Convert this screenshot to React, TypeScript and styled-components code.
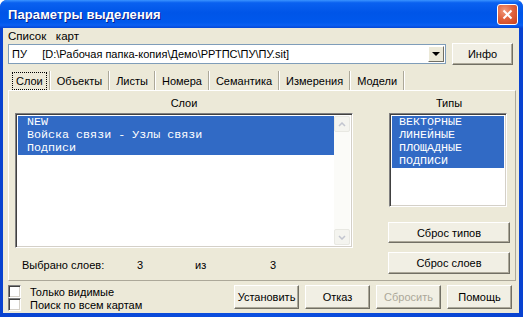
import React from 'react';
import styled, { createGlobalStyle } from 'styled-components';

const Global = createGlobalStyle`
  html, body { margin: 0; padding: 0; background: #fff; }
  body { font-family: "Liberation Sans", Arial, sans-serif; font-size: 11px; color: #000; }
`;

const S = {
  Window: styled.div`
    width: 523px;
    height: 317px;
    display: flex;
    flex-direction: column;
    background: linear-gradient(to right, #0842d0, #0b4fe0 50%, #0842d0);
    border-radius: 7px 7px 0 0;
    overflow: hidden;
  `,
  TitleBar: styled.div`
    height: 28px;
    flex-shrink: 0;
    display: flex;
    align-items: center;
    justify-content: space-between;
    padding: 0 5px 0 8px;
    background: linear-gradient(to bottom, #3a93ff 0%, #0a61f0 10%, #0055e8 45%, #0058ec 80%, #0a5ff2 90%, #0447d6 100%);
  `,
  Title: styled.div`
    color: #fff;
    font-family: "Liberation Sans", Arial, sans-serif;
    font-weight: bold;
    font-size: 13px;
    letter-spacing: 0.1px;
    text-shadow: 1px 1px 0 #0a1e8a;
  `,
  Close: styled.div`
    width: 21px;
    height: 21px;
    box-sizing: border-box;
    border: 1px solid #fff;
    border-radius: 3px;
    background: radial-gradient(circle at 35% 30%, #f29b7c 0%, #e0643f 45%, #c9401b 100%);
    display: flex;
    align-items: center;
    justify-content: center;
  `,
  Body: styled.div`
    flex: 1;
    margin: 0 4px 4px 3px;
    background: #ece9d8;
    display: flex;
    flex-direction: column;
    padding-left: 5px;
  `,
  Label: styled.div`
    height: 14px;
    line-height: 14px;
    margin-top: 1px;
    white-space: pre;
    font-size: 11.5px;
  `,
  ComboRow: styled.div`
    height: 22px;
    display: flex;
    align-items: center;
    padding-right: 6px;
  `,
  Combo: styled.div`
    width: 438px;
    height: 20px;
    box-sizing: border-box;
    background: #fff;
    border: 1px solid #7f9db9;
    display: flex;
    align-items: center;
    padding: 0 1px 0 3px;
    white-space: pre;
  `,
  ComboText: styled.div`
    flex: 1;
  `,
  DropButton: styled.div`
    width: 16px;
    height: 16px;
    box-sizing: border-box;
    background: #ece9d8;
    border: 1px solid;
    border-color: #fff #716f64 #716f64 #fff;
    display: flex;
    align-items: center;
    justify-content: center;
  `,
  Arrow: styled.div`
    width: 0;
    height: 0;
    border-left: 4px solid transparent;
    border-right: 4px solid transparent;
    border-top: 4px solid #000;
  `,
  Button: styled.div<{ $w: number; $h?: number; $disabled?: boolean }>`
    width: ${p => p.$w}px;
    height: ${p => p.$h ?? 22}px;
    box-sizing: border-box;
    background: #f1efe4;
    border: 1px solid;
    border-color: #fff #716f64 #716f64 #fff;
    box-shadow: inset -1px -1px 0 #aca899;
    display: flex;
    align-items: center;
    justify-content: center;
    color: ${p => (p.$disabled ? '#aca899' : '#000')};
    flex-shrink: 0;
  `,
  InfoButton: styled.div`
    margin-left: auto;
  `,
  Tabs: styled.div`
    display: flex;
    height: 19px;
    margin: 6px 0 0 3px;
  `,
  Tab: styled.div`
    height: 19px;
    box-sizing: border-box;
    padding: 0 3px 0 2px;
    display: flex;
    align-items: center;
    border-right: 1px solid #aca899;
    box-shadow: 1px 0 0 #fff;
    margin-right: 2px;
  `,
  TabFocus: styled.span<{ $active?: boolean }>`
    padding: 2px 3px;
    outline: ${p => (p.$active ? '1px dotted #000' : 'none')};
  `,
  Panel: styled.div`
    height: 191px;
    margin-right: 3px;
    box-sizing: border-box;
    border: 1px solid;
    border-color: #fff #aca899 #aca899 #fff;
    display: flex;
    padding: 5px 5px 0 6px;
    gap: 35px;
  `,
  Column: styled.div<{ $w: number }>`
    width: ${p => p.$w}px;
    display: flex;
    flex-direction: column;
  `,
  Header: styled.div`
    height: 14px;
    line-height: 14px;
    text-align: center;
    margin-bottom: 3px;
  `,
  List: styled.div<{ $h: number; $pad: number }>`
    height: ${p => p.$h}px;
    box-sizing: border-box;
    background: #fff;
    border: 1px solid;
    border-color: #808080 #fff #fff #808080;
    box-shadow: inset 1px 1px 0 #404040, inset -1px -1px 0 #d4d0c8;
    padding: 2px;
    display: flex;
    font-family: "Liberation Mono", "Courier New", monospace;
    font-size: 11.7px;
    --pad: ${p => p.$pad}px;
  `,
  Items: styled.div`
    flex: 1;
    display: flex;
    flex-direction: column;
  `,
  Item: styled.div`
    height: 13px;
    line-height: 13px;
    background: #316ac5;
    color: #fff;
    padding-left: var(--pad);
    white-space: pre;
  `,
  Scroll: styled.div`
    width: 16px;
    background: #fbfbf8;
    display: flex;
    flex-direction: column;
    justify-content: space-between;
  `,
  ScrollButton: styled.div`
    width: 16px;
    height: 16px;
    box-sizing: border-box;
    background: #f4f4ef;
    border: 1px solid #e8e8e2;
    border-radius: 2px;
    display: flex;
    align-items: center;
    justify-content: center;
  `,
  Status: styled.div`
    display: grid;
    grid-template-columns: 115px 58px 75px 20px;
    margin: 10px 0 0 7px;
    height: 14px;
    line-height: 14px;
  `,
  Bottom: styled.div`
    flex: 1;
    display: flex;
    justify-content: space-between;
    align-items: flex-start;
    padding: 3px 7px 0 0;
  `,
  Checks: styled.div`
    display: flex;
    flex-direction: column;
    margin-top: 1px;
  `,
  CheckRow: styled.div`
    height: 13px;
    display: flex;
    align-items: center;
    gap: 9px;
  `,
  Box: styled.div`
    width: 13px;
    height: 13px;
    box-sizing: border-box;
    background: #fff;
    border: 1px solid;
    border-color: #808080 #fff #fff #808080;
    box-shadow: inset 1px 1px 0 #404040, inset -1px -1px 0 #d4d0c8;
  `,
  Buttons: styled.div`
    display: flex;
    gap: 6px;
    margin-top: 1px;
  `,
  Spacer: styled.div<{ $h: number }>`
    height: ${p => p.$h}px;
    flex-shrink: 0;
  `,
};

const LAYERS = ['NEW', 'Войска связи - Узлы связи', 'Подписи'];
const TYPES = ['ВЕКТОРНЫЕ', 'ЛИНЕЙНЫЕ', 'ПЛОЩАДНЫЕ', 'ПОДПИСИ'];
const TABS = ['Слои', 'Объекты', 'Листы', 'Номера', 'Семантика', 'Измерения', 'Модели'];

const Chevron = ({ up }: { up?: boolean }) => (
  <svg width="8" height="5" viewBox="0 0 8 5">
    <polyline
      points={up ? '1,4 4,1 7,4' : '1,1 4,4 7,1'}
      fill="none"
      stroke="#c2c5cf"
      strokeWidth="1.5"
    />
  </svg>
);

const App = () => {
  return (
    <>
      <Global />
      <S.Window>
        <S.TitleBar>
          <S.Title>Параметры выделения</S.Title>
          <S.Close>
            <svg width="11" height="11" viewBox="0 0 11 11">
              <path d="M1.5 1.5 L9.5 9.5 M9.5 1.5 L1.5 9.5" stroke="#fff" strokeWidth="2" />
            </svg>
          </S.Close>
        </S.TitleBar>
        <S.Body>
          <S.Label>{'Список   карт'}</S.Label>
          <S.ComboRow>
            <S.Combo>
              <S.ComboText>{'ПУ     [D:\\Рабочая папка-копия\\Демо\\РРТПС\\ПУ\\ПУ.sit]'}</S.ComboText>
              <S.DropButton>
                <S.Arrow />
              </S.DropButton>
            </S.Combo>
            <S.InfoButton>
              <S.Button $w={61}>Инфо</S.Button>
            </S.InfoButton>
          </S.ComboRow>
          <S.Tabs>
            {TABS.map((t, i) => (
              <S.Tab key={t}>
                <S.TabFocus $active={i === 0}>{t}</S.TabFocus>
              </S.Tab>
            ))}
          </S.Tabs>
          <S.Panel>
            <S.Column $w={338}>
              <S.Header>Слои</S.Header>
              <S.List $h={135} $pad={9}>
                <S.Items>
                  {LAYERS.map(l => (
                    <S.Item key={l}>{l}</S.Item>
                  ))}
                </S.Items>
                <S.Scroll>
                  <S.ScrollButton>
                    <Chevron up />
                  </S.ScrollButton>
                  <S.ScrollButton>
                    <Chevron />
                  </S.ScrollButton>
                </S.Scroll>
              </S.List>
              <S.Status>
                <span>Выбрано слоев:</span>
                <span>3</span>
                <span>из</span>
                <span>3</span>
              </S.Status>
            </S.Column>
            <S.Column $w={122}>
              <S.Header>Типы</S.Header>
              <S.List $h={94} $pad={7} style={{ margin: '0 3px 0 1px' }}>
                <S.Items>
                  {TYPES.map(t => (
                    <S.Item key={t}>{t}</S.Item>
                  ))}
                </S.Items>
              </S.List>
              <S.Spacer $h={15} />
              <S.Button $w={122} $h={21}>Сброс типов</S.Button>
              <S.Spacer $h={9} />
              <S.Button $w={122}>Сброс слоев</S.Button>
            </S.Column>
          </S.Panel>
          <S.Bottom>
            <S.Checks>
              <S.CheckRow>
                <S.Box />
                <span>Только видимые</span>
              </S.CheckRow>
              <S.CheckRow>
                <S.Box />
                <span>Поиск по всем картам</span>
              </S.CheckRow>
            </S.Checks>
            <S.Buttons>
              <S.Button $w={65} $h={24}>Установить</S.Button>
              <S.Button $w={65} $h={24}>Отказ</S.Button>
              <S.Button $w={65} $h={24} $disabled>Сбросить</S.Button>
              <S.Button $w={65} $h={24}>Помощь</S.Button>
            </S.Buttons>
          </S.Bottom>
        </S.Body>
      </S.Window>
    </>
  );
};

export default App;
